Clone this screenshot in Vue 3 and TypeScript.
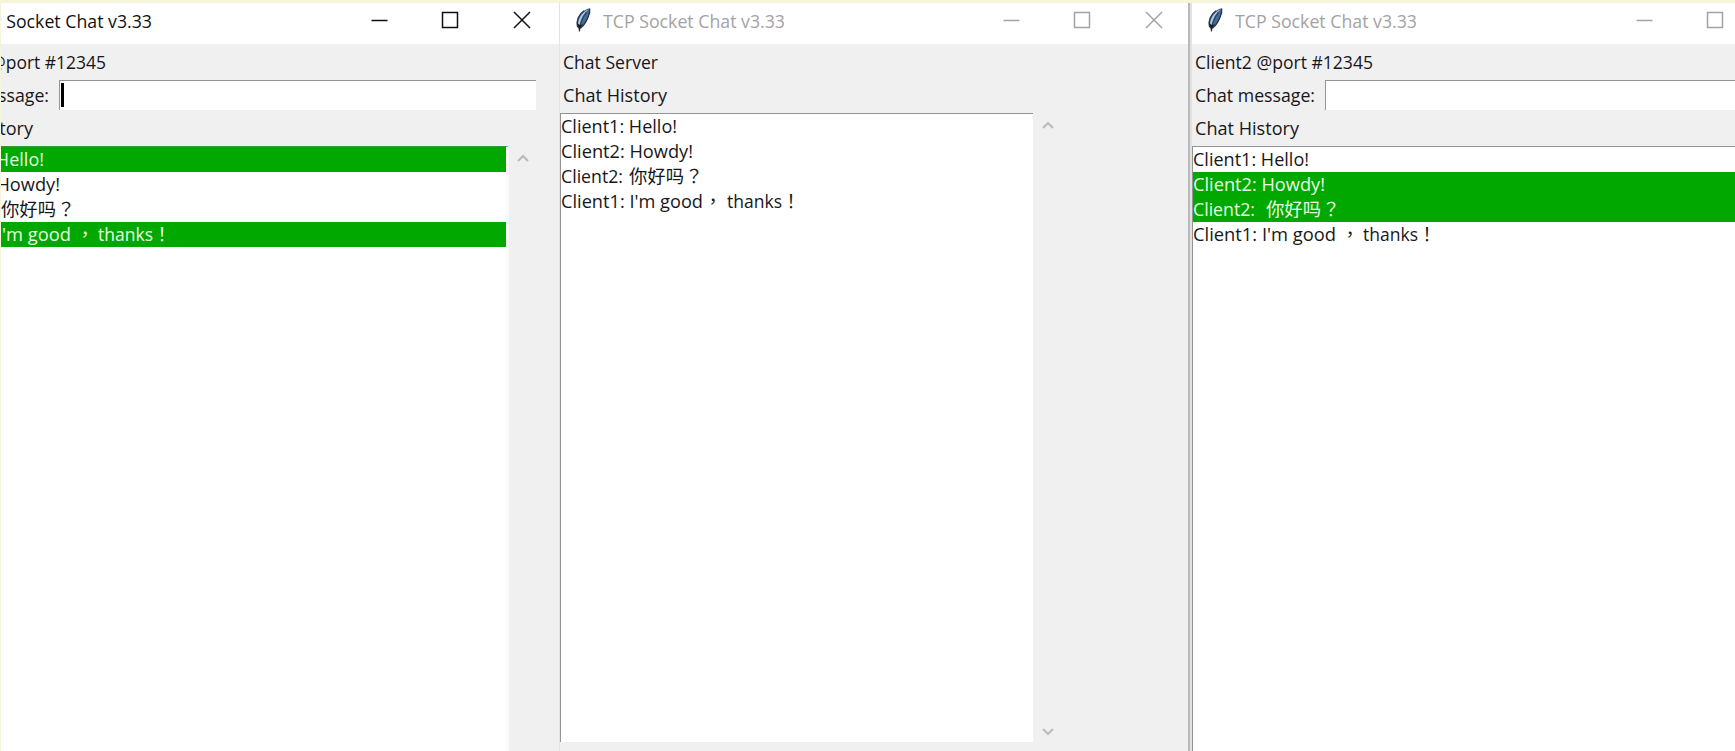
<script setup lang="ts">
interface Segment {
  text: string
  gap: number
  width: number
  cjk?: boolean
}

interface Message {
  segments: Segment[]
  selected: boolean
}

interface ChatWindow {
  id: string
  active: boolean
  heading: Segment
  hasEntry: boolean
  messages: Message[]
}

// Condenses a run of text horizontally so that it fills its column.
const vFit = {
  mounted(el: HTMLElement, binding: { value: number }) {
    const natural = el.getBoundingClientRect().width
    el.style.transform = `scaleX(${binding.value / natural})`
  },
}

const seg = (text: string, gap: number, width: number, cjk = false): Segment => ({ text, gap, width, cjk })

const hello = [seg('Client1: Hello!', 0, 116)]
const howdy = [seg('Client2: Howdy!', 0, 132)]
const clientGreeting = [seg('Client2:', 0, 62), seg('你好吗', 11, 55, true), seg('？', 1, 18, true)]
const clientReply = [
  seg("Client1: I'm good", 0, 143),
  seg('，', 5, 18, true),
  seg('thanks', 4, 55),
  seg('！', 0, 18, true),
]
const serverGreeting = [seg('Client2:', 0, 62), seg('你好吗', 6, 55, true), seg('？', 1, 18, true)]
const serverReply = [
  seg("Client1: I'm good", 0, 142),
  seg('，', 1, 18, true),
  seg('thanks', 5, 55),
  seg('！', 0, 18, true),
]

const log = (rows: Segment[][], picked: number[]): Message[] =>
  rows.map((segments, i) => ({ segments, selected: picked.includes(i) }))

const windows: ChatWindow[] = [
  {
    id: 'client1',
    active: true,
    heading: seg('Client1 @port #12345', 0, 177),
    hasEntry: true,
    messages: log([hello, howdy, clientGreeting, clientReply], [0, 3]),
  },
  {
    id: 'server',
    active: false,
    heading: seg('Chat Server', 0, 95),
    hasEntry: false,
    messages: log([hello, howdy, serverGreeting, serverReply], []),
  },
  {
    id: 'client2',
    active: false,
    heading: seg('Client2 @port #12345', 0, 178),
    hasEntry: true,
    messages: log([hello, howdy, clientGreeting, clientReply], [1, 2]),
  },
]
</script>

<template>
  <div class="desktop">
    <div v-for="win in windows" :key="win.id" class="slot" :class="win.id">
      <section class="window" :class="{ active: win.active }">
        <header class="titlebar">
          <svg class="feather" viewBox="0 0 18 26">
            <path d="M15.500 1.500C11 2 5.500 6.500 3.500 12C2.500 15 2.300 18 3.300 20.500L6.500 21C11 18 14.500 12 15.500 6Z" fill="#456a93" />
            <path d="M14.500 2.500C10 6 6.500 12 5.500 19L4 18C4 11 8.500 5 14.500 2.500Z" fill="#a9c8e6" />
            <path d="M15.500 1.500C16.700 6 12 17 6.500 21M3.600 20C1.800 14 5 7 10 3.800" fill="none" stroke="#26354a" stroke-width="1.300" />
            <path d="M12.500 5.500C8.500 10 6.200 16 5.300 24.500" fill="none" stroke="#34465c" stroke-width="1.200" />
            <path d="M3.400 16L4.300 21L5.300 24.500L6.700 20.600L8.800 17.500L5.800 18Z" fill="#1a2028" />
          </svg>
          <div class="title"><span v-fit="182" class="run">TCP Socket Chat v3.33</span></div>
          <svg class="controls" viewBox="0 0 160 20">
            <path d="M0.500 10.500H16.500M71.500 2.500H86.500V17.500H71.500ZM143 2L159 18M159 2L143 18" fill="none" stroke="currentColor" stroke-width="1.500" />
          </svg>
        </header>

        <div class="form">
          <div class="row"><span v-fit="win.heading.width" class="run">{{ win.heading.text }}</span></div>
          <div v-if="win.hasEntry" class="row">
            <div class="label"><span v-fit="120" class="run">Chat message:</span></div>
            <div class="entry"><i v-if="win.active" class="caret"></i></div>
          </div>
          <div class="row"><span v-fit="104" class="run">Chat History</span></div>
        </div>

        <div class="history">
          <div class="list">
            <div v-for="(msg, i) in win.messages" :key="i" class="message" :class="{ selected: msg.selected }">
              <div
                v-for="(part, j) in msg.segments"
                :key="j"
                class="part"
                :style="{ width: part.width + 'px', marginLeft: part.gap + 'px' }"
              >
                <span v-fit="part.width" class="run" :class="{ cjk: part.cjk }">{{ part.text }}</span>
              </div>
            </div>
          </div>
          <div class="scrollbar">
            <svg viewBox="0 0 12 10"><path d="M1 8L6 3L11 8" /></svg>
            <svg viewBox="0 0 12 10"><path d="M1 2L6 7L11 2" /></svg>
          </div>
        </div>
      </section>
    </div>
  </div>
</template>

<style>
body {
  margin: 0;
  overflow: hidden;
}
</style>

<style scoped>
.desktop {
  box-sizing: border-box;
  display: flex;
  width: 1735px;
  height: 751px;
  overflow: hidden;
  border-top: 3px solid #f5f5dc;
  border-left: 1px solid #f5f5dc;
  background: #f0f0f0;
  color: #17171b;
  font: 18px "Open Sans", "Noto Sans", "Noto Sans CJK TC", sans-serif;
}
.slot {
  flex: none;
  box-sizing: border-box;
  height: 748px;
  overflow: hidden;
}
.client1 {
  display: flex;
  justify-content: flex-end;
  width: 558px;
}
.server {
  width: 629px;
  border-left: 1px solid #e4e4e4;
}
.client2 {
  width: 547px;
  border-left: 2px solid #b9b9b9;
  padding-left: 2px;
  background: linear-gradient(to right, #e2e2e2 2px, transparent 2px);
}
.window {
  flex: none;
  display: flex;
  flex-direction: column;
  width: 632px;
  height: 748px;
}
.client1 .window,
.client2 .window {
  height: 800px;
}
.run {
  display: inline-block;
  flex: none;
  white-space: pre;
  transform-origin: 0 50%;
}
.titlebar {
  flex: none;
  display: flex;
  height: 41px;
  box-sizing: border-box;
  padding-left: 14px;
  background: #fff;
  color: #a3a3a3;
}
.active .titlebar {
  color: #111;
}
.feather {
  flex: none;
  width: 18px;
  height: 26px;
  margin-top: 4px;
}
.title {
  flex: none;
  display: flex;
  width: 390px;
  margin-left: 11px;
  font-size: 17.5px;
  line-height: 36px;
}
.controls {
  flex: none;
  width: 160px;
  height: 20px;
  margin: 7px 0 0 10px;
}
.client1 .controls,
.client2 .controls {
  margin-left: 11px;
}
.form {
  flex: none;
  padding: 2px 0 0 3px;
}
.client1 .form {
  padding-left: 2px;
}
.row {
  display: flex;
  height: 33px;
  line-height: 33px;
}
.label {
  flex: none;
  display: flex;
  width: 130px;
}
.entry {
  box-sizing: border-box;
  width: 477px;
  height: 30px;
  margin-top: 1px;
  padding: 2px 0 0 1px;
  border-top: 1px solid #949494;
  border-left: 1px solid #949494;
  background: #fff;
}
.caret {
  display: block;
  width: 3px;
  height: 24px;
  background: #000;
}
.history {
  flex: 1;
  display: flex;
  min-height: 0;
  margin-top: 1px;
}
.server .history {
  margin-bottom: 9px;
}
.list {
  box-sizing: border-box;
  width: 473px;
  border-top: 1px solid #949494;
  border-left: 1px solid #949494;
  background: #fff;
}
.client1 .list {
  width: 582px;
  border-top-color: #2f9f2f;
  border-right: 3px solid #fafafa;
}
.client2 .list {
  width: 583px;
}
.message {
  display: flex;
  height: 25px;
  line-height: 25px;
}
.selected {
  background: #00a800;
  color: #e9ffe4;
}
.part {
  flex: none;
  display: flex;
  height: 25px;
}
.cjk {
  font-family: "Noto Sans CJK TC", sans-serif;
  line-height: 23px;
}
.scrollbar {
  display: flex;
  flex-direction: column;
  justify-content: space-between;
  box-sizing: border-box;
  padding: 7px 0 5px 9px;
}
.client1 .scrollbar {
  padding-left: 8px;
}
.scrollbar svg {
  width: 12px;
  height: 10px;
}
.scrollbar path {
  fill: none;
  stroke: #bbb;
  stroke-width: 2.2;
}
</style>
